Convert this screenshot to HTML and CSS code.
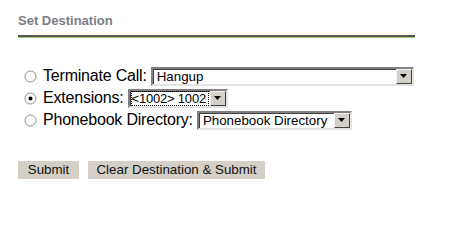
FILE: index.html
```html
<!DOCTYPE html>
<html>
<head>
<meta charset="utf-8">
<link rel="stylesheet" href="styles.css">
</head>
<body>
<div class="page">
  <h2 class="title">Set Destination</h2>
  <div class="options">
    <div class="row">
      <svg class="radio" width="13" height="13" viewBox="0 0 13 13"><circle cx="6.5" cy="6.5" r="5.5" fill="#fff" stroke="#8a8a8a"/></svg>
      <span class="label">Terminate Call:</span>
      <span class="select w1"><span class="val">Hangup</span><span class="arrow"><svg width="7" height="4" viewBox="0 0 7 4"><path d="M0 0H7L3.5 4Z" fill="#000"/></svg></span></span>
    </div>
    <div class="row">
      <svg class="radio" width="13" height="13" viewBox="0 0 13 13"><circle cx="6.5" cy="6.5" r="5.5" fill="#fff" stroke="#8a8a8a"/><circle cx="6.5" cy="6.5" r="2" fill="#000"/></svg>
      <span class="label">Extensions:</span>
      <span class="select w2"><span class="val focus">&lt;1002&gt; 1002</span><span class="arrow"><svg width="7" height="4" viewBox="0 0 7 4"><path d="M0 0H7L3.5 4Z" fill="#000"/></svg></span></span>
    </div>
    <div class="row">
      <svg class="radio" width="13" height="13" viewBox="0 0 13 13"><circle cx="6.5" cy="6.5" r="5.5" fill="#fff" stroke="#8a8a8a"/></svg>
      <span class="label">Phonebook Directory:</span>
      <span class="select w3"><span class="val">Phonebook Directory</span><span class="arrow"><svg width="7" height="4" viewBox="0 0 7 4"><path d="M0 0H7L3.5 4Z" fill="#000"/></svg></span></span>
    </div>
  </div>
  <div class="buttons">
    <button class="btn b1">Submit</button>
    <button class="btn b2">Clear Destination &amp; Submit</button>
  </div>
</div>
</body>
</html>
```
FILE: styles.css
```css
html, body { margin: 0; padding: 0; background: #fff; }
body { font-family: "Liberation Sans", Arial, sans-serif; }
.page { padding: 13px 0 0 18px; width: 397px; }
.title {
  margin: 0;
  font-size: 13px;
  font-weight: bold;
  color: #7d7d85;
  height: 22px;
  line-height: 16px;
  border-bottom: 2px solid #555;
  box-shadow: 0 1px 0 #9ccb6f;
}
.options { margin-top: 28px; padding-left: 6px; display: flex; flex-direction: column; }
.row { display: flex; align-items: center; height: 22px; }
.radio { margin-right: 6px; flex: none; }
.label { font-size: 16px; color: #000; margin-right: 4px; white-space: nowrap; letter-spacing: -0.2px; }
.select {
  display: flex; align-items: center; height: 19px; box-sizing: border-box;
  border: 2px solid; border-color: #808080 #e4e4e4 #e4e4e4 #808080;
  box-shadow: inset 1px 1px 0 #404040;
  background: #fff; font-size: 13.33px; color: #000;
}
.val { flex: 1; padding-left: 4px; white-space: nowrap; overflow: hidden; line-height: 15px; }
.focus { outline: 1px dotted #000; outline-offset: -1px; margin: 1px; padding-left: 1px; font-size: 13px; letter-spacing: -0.2px; }
.arrow {
  width: 16px; height: 15px; box-sizing: border-box; flex: none;
  background: #d4d0c8;
  border: 1px solid; border-color: #f4f4f4 #404040 #404040 #f4f4f4;
  display: flex; align-items: center; justify-content: center;
}
.w1 { width: 263px; }
.w2 { width: 100px; }
.w3 { width: 155px; }
.buttons { display: flex; gap: 9px; margin-top: 30px; }
.btn {
  font-family: "Liberation Sans", Arial, sans-serif;
  font-size: 13.33px; color: #111; background: #d4d0c8;
  border: none; height: 18px; padding: 0; line-height: 18px;
}
.b1 { width: 61px; }
.b2 { width: 177px; }
```
